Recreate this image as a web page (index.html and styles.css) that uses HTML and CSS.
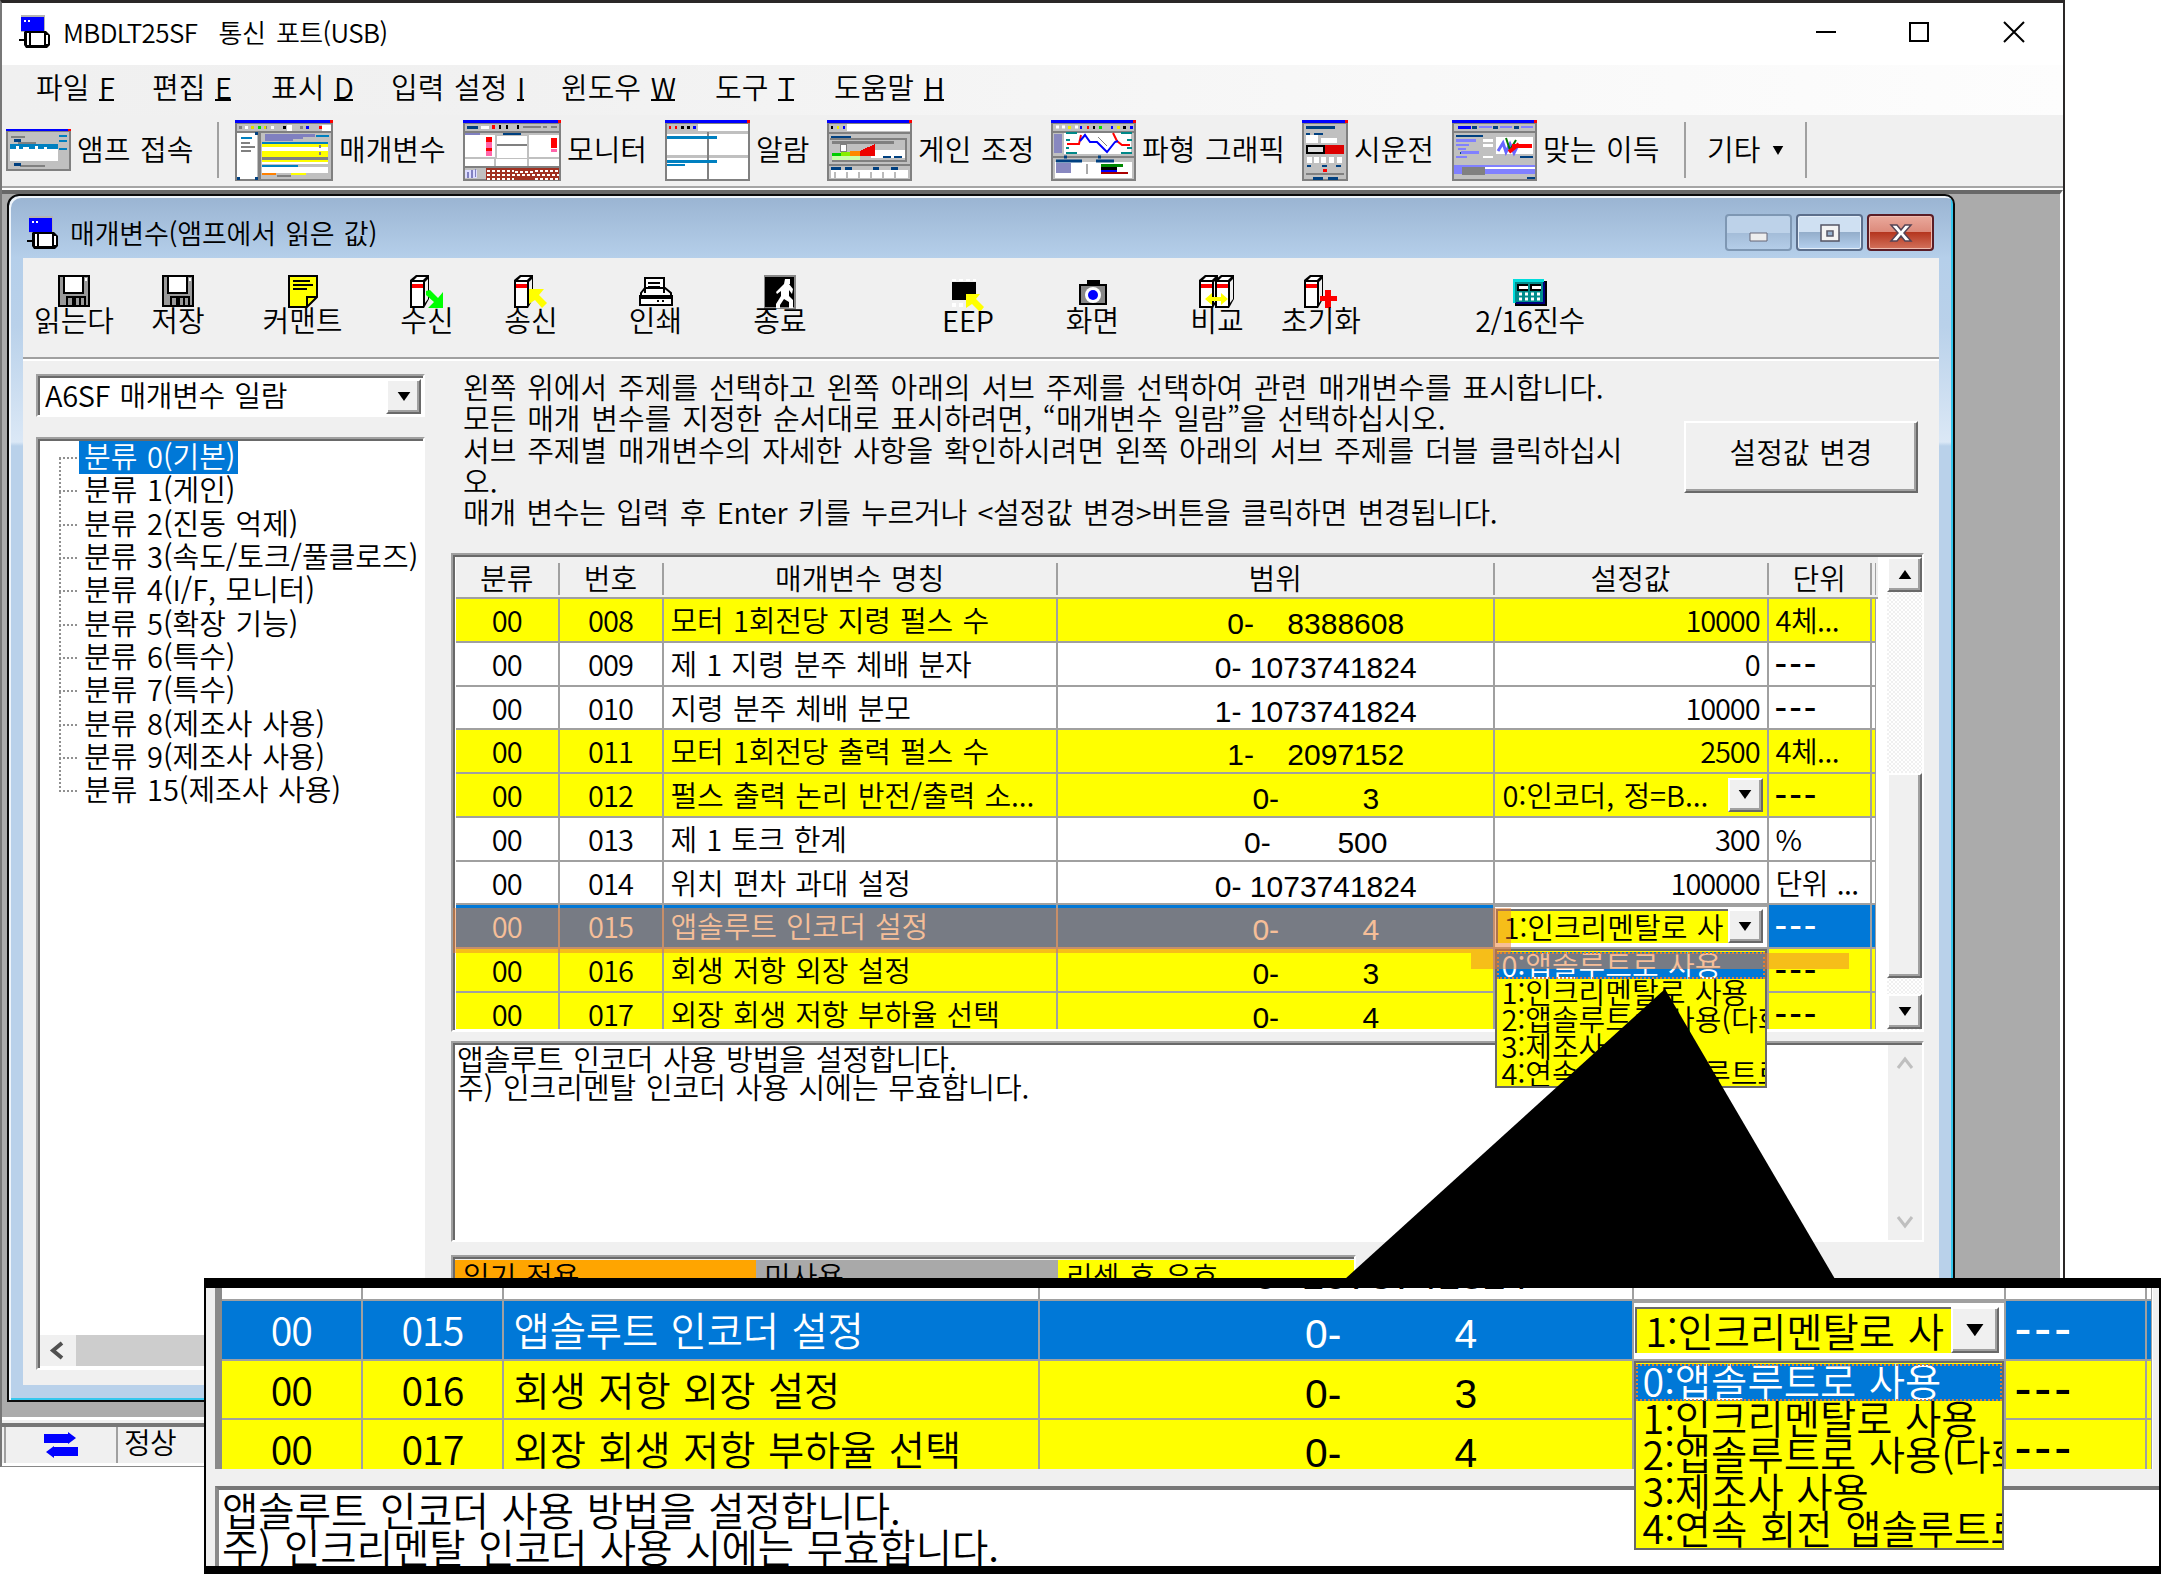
FILE: index.html
```html
<!DOCTYPE html>
<html lang="ko">
<head>
<meta charset="utf-8">
<title>MBDLT25SF 통신 포트(USB)</title>
<link rel="stylesheet" href="styles.css">
</head>
<body>
<svg width="0" height="0" class="defs" aria-hidden="true">
  <symbol id="app" viewBox="0 0 32 34">
    <path d="M2 0h24v17H2z" fill="#b4b4b4"/><path d="M2 2h23v14H2z" fill="#00f"/>
    <path d="M5 5h2v2H5zM9 5h2v2H9z" fill="#fff"/>
    <path d="M0 24h6v2H0z"/><path d="M6 16h21l4 4v10l-3 3H7l-2-3V17z"/>
    <path d="M8 18h2v12H8zM12 18h13v12H12zM27 20h2v9h-2z" fill="#fff"/>
  </symbol>
  <symbol id="disk" viewBox="0 0 32 32">
    <path d="M0 0h32v32H0z"/><path d="M2 2h28v28H2z" fill="#999"/><path d="M5 0h21v19H5z"/><path d="M7 2h17v15H7z" fill="#fff"/>
    <path d="M8 21h20v9H8z"/><path d="M10 23h4v7h-4zM18 23h3v7h-3zM23 23h3v7h-3z" fill="#999"/><path d="M27 3h2v3h-2z" fill="#fff"/>
  </symbol>
  <symbol id="book" viewBox="0 0 24 34">
    <path d="M1 5l6-5h13v24l-5 9H1z"/><path d="M8 2h9l-3 3H5z" fill="#fff"/><path d="M3 7h11v24H3z" fill="#fff"/><path d="M3 9h11v4H3z" fill="#f00"/><path d="M16 7l3-3v20l-3 4z" fill="#efefef"/>
  </symbol>
  <symbol id="down" viewBox="0 0 16 10"><path d="M1 0h14L8 10z"/></symbol>
</svg>

<main class="window">
  <header class="titlebar">
    <svg class="app-icon"><use href="#app"/></svg>
    <h1 class="title">MBDLT25SF&nbsp; 통신 포트(USB)</h1>
    <svg class="win-controls" viewBox="0 0 212 24" fill="none" stroke="#000" stroke-width="2"><path d="M0 12h20M94 3h18v18H94zM188 2l20 20M208 2l-20 20"/></svg>
  </header>
  <nav class="menubar">
    <span>파일 <u>F</u></span><span>편집 <u>E</u></span><span>표시 <u>D</u></span><span>입력 설정 <u>I</u></span><span>윈도우 <u>W</u></span><span>도구 <u>T</u></span><span>도움말 <u>H</u></span>
  </nav>
  <div class="toolbar">
    <div class="tool tool-connect">
      <svg width="65" height="42" viewBox="0 0 65 42" shape-rendering="crispEdges"><path d="M0 0h65v42H0z" fill="#808080"/><path d="M2 3h61v37H2z" fill="#c0c0c0"/><path d="M0 0h62v2H0z" fill="#00f"/><path d="M62 0h3v2h-3z" fill="red"/><path d="M5 7h14v2H5zM12 13h18v2H12zM14 36h25v2H14z" fill="#808080"/><path d="M4 15h48v5H4zM53 6h8v2h-8zM53 11h8v2h-8zM53 19h8v2h-8z" fill="#0080c0"/><path d="M4 20h48v12H4zM10 17h3v3h-3zM17 18h6v2h-6zM29 17h3v3h-3zM38 18h3v2h-3z" fill="#fff"/><path d="M8 10h7v3H8zM8 34h7v3H8z" fill="#004080"/></svg>
      <span>앰프 접속</span></div>
    <div class="tool tool-param">
      <svg width="98" height="61" viewBox="0 0 98 61" shape-rendering="crispEdges"><path d="M0 0h98v61H0z" fill="#808080"/><path d="M2 4h94v55H2z" fill="#c0c0c0"/><path d="M0 0h95v3H0z" fill="#00f"/><path d="M95 0h3v3h-3z" fill="red"/><path d="M0 11h98v2H0z" fill="#808080"/><path d="M87 5h9v6h-9zM52 5h5v6h-5zM10 6h3v3h-3zM36 6h3v3h-3z" fill="#fff"/><path d="M4 6h3v3H4zM29 6h3v3h-3zM65 6h3v3h-3z" fill="#808080"/><path d="M16 6h3v3h-3zM29 6h2v3h-2z" fill="#dd0"/><path d="M23 6h3v3h-3z" fill="#0d0"/><path d="M48 6h3v3h-3z"/><path d="M71 6h3v3h-3z" fill="#00f"/><path d="M84 6h3v3h-3z" fill="red"/><path d="M2 13h20v46H2z" fill="#fff"/><path d="M23 13h3v48h-3zM6 22h9v2H6zM6 26h14v2H6zM6 30h10v2H6z" fill="#808080"/><path d="M6 17h11v2H6zM81 15h13v2H81zM27 22h66v2H27zM27 45h36v2H27z" fill="#0080c0"/><path d="M30 14h50v3H68v2H58v2H30z" fill="#8080c0"/><path d="M27 27h66v5H27zM27 41h66v3H27zM27 47h66v6H27z" fill="#fff"/><path d="M27 24h66v3H27zM27 31h66v6H27zM27 40h66v2H27zM56 53h15v2H56z" fill="#ff0"/><path d="M27 37h66v3H27zM84 25h2v3h-2zM84 32h2v3h-2zM42 55h14v2H42z" fill="#808080"/><path d="M27 53h14v2H27z" fill="#ff8000"/><path d="M2 57h3v3H2zM20 57h3v3h-3zM20 12h3v3h-3z" fill="#004080"/></svg>
      <span>매개변수</span></div>
    <div class="tool tool-monitor">
      <svg width="98" height="61" viewBox="0 0 98 61" shape-rendering="crispEdges"><path d="M0 0h98v61H0z" fill="#808080"/><path d="M2 4h94v55H2z" fill="#c0c0c0"/><path d="M0 0h95v3H0z" fill="#00f"/><path d="M95 0h3v3h-3z" fill="red"/><path d="M2 15h30v22H2zM34 16h30v22H34zM66 15h30v22H66zM2 39h29v7H2zM33 39h31v7H33zM66 39h30v7H66zM18 6h8v3h-8z" fill="#fff"/><path d="M0 11h98v2H0zM34 24h30v2H34zM60 6h18v2H60zM80 6h4v2h-4zM88 6h6v2h-6zM0 46h98v2H0z" fill="#808080"/><path d="M4 6h11v3H4zM40 13h18v2H40z" fill="#004080"/><path d="M29 5h3v4h-3zM23 17h6v5h-6zM23 28h6v3h-6zM88 18h6v10h-6z" fill="red"/><path d="M23 22h6v6h-6zM23 31h6v5h-6zM88 29h6v3h-6z" fill="#f6a"/><path d="M36 5h2v4h-2zM43 5h2v4h-2zM54 5h2v4h-2z"/><path d="M2 50h12v8H2z" fill="#ddf"/><path d="M4 52h2v6H4zM8 50h2v8H8zM12 49h1v8h-1zM2 13h15v2H2z" fill="#8080c0"/><path d="M23 48h73v12H23z" fill="#a03020"/><path d="M24 51h27M24 55h72M24 59h27M52 52h20M72 51h24M72 59h24" stroke="#fff" stroke-width="2" stroke-dasharray="3 2"/></svg>
      <span>모니터</span></div>
    <div class="tool tool-alarm">
      <svg width="85" height="61" viewBox="0 0 85 61" shape-rendering="crispEdges"><path d="M0 0h85v61H0z" fill="#808080"/><path d="M2 4h81v55H2z" fill="#c0c0c0"/><path d="M0 0h82v3H0z" fill="#00f"/><path d="M82 0h3v3h-3z" fill="red"/><path d="M33 4h50v7H33zM2 14h81v21H2zM2 38h81v21H2z" fill="#fff"/><path d="M4 6h2v3H4zM10 6h2v3h-2z" fill="red"/><path d="M16 6h3v3h-3zM22 6h3v3h-3z"/><path d="M28 6h3v3h-3z" fill="#00f"/><path d="M42 12h2v47h-2z" fill="#808080"/><path d="M2 16h50v3H2zM2 40h50v3H2zM2 44h18v2H2z" fill="#0080c0"/></svg>
      <span>알람</span></div>
    <div class="tool tool-gain">
      <svg width="85" height="61" viewBox="0 0 85 61" shape-rendering="crispEdges"><path d="M0 0h85v61H0z" fill="#808080"/><path d="M2 4h81v55H2z" fill="#c0c0c0"/><path d="M0 0h82v3H0z" fill="#00f"/><path d="M82 0h3v3h-3z" fill="red"/><path d="M20 4h63v7H20zM4 50h77v8H4zM44 30h34v8H44z" fill="#fff"/><path d="M4 6h2v3H4z"/><path d="M10 6h2v3h-2z" fill="#ee0"/><path d="M16 6h2v3h-2z" fill="#00f"/><path d="M0 12h85v2H0zM3 18h77v2H3zM5 21h62v3H5zM5 40h75v2H5zM0 44h85v2H0zM78 20h2v20h-2z" fill="#808080"/><path d="M4 16h20v2H4zM4 47h10v3H4zM18 47h7v3h-7zM46 47h6v3h-6zM64 47h7v3h-7zM56 36h8v2h-8zM67 36h8v2h-8z" fill="#004080"/><path d="M5 33h9v3H5z" fill="#0c0"/><path d="M14 32h9v4h-9z" fill="#8e0"/><path d="M23 31h10v5H23z" fill="#f80"/><path d="M33 36v-5l15-7v12z" fill="#e00"/><path d="M5 36h28v4H5z" fill="#cfa"/><path d="M13 24h6v7h-6z" fill="#fff" stroke="#808080"/><path d="M8 52v6M20 52v6M32 52v6M44 52v6M56 52v6M68 52v6" stroke="#bbb" stroke-width="2"/></svg>
      <span>게인 조정</span></div>
    <div class="tool tool-wave">
      <svg width="85" height="61" viewBox="0 0 85 61"><path d="M0 0h85v61H0z" fill="#808080"/><path d="M2 4h81v55H2z" fill="#c0c0c0"/><path d="M0 0h82v3H0z" fill="#00f"/><path d="M82 0h3v3h-3z" fill="red"/><path d="M0 11h85v2H0zM2 36h81v2H2z" fill="#808080"/><path d="M13 13h67v21H13zM4 42h77v16H4z" fill="#fff"/><path d="M5 7h12M24 7h3" stroke="#fff" stroke-width="3" stroke-dasharray="3 3"/><path d="M17 6h3v3h-3zM66 6h3v3h-3z" fill="#ee0"/><path d="M29 6h2v3h-2zM60 6h2v3h-2zM79 6h3v3h-3z" fill="#00f"/><path d="M36 6h2v3h-2z" fill="red"/><path d="M42 6h2v3h-2zM72 6h3v3h-3z"/><path d="M48 6h3v3h-3z" fill="#0d0"/><path d="M15 13h11M15 33h11M70 13h11M70 33h11M15 20h4M76 20h5M15 28h3M76 28h5" stroke="#088" stroke-width="2"/><path d="M16 24h12l2-9M62 13l4 8 5 4h8" fill="none" stroke="red" stroke-width="2"/><path d="M29 21l5-6 5 7h7l10 10 8-10 3-1" fill="none" stroke="#00f" stroke-width="2"/><path d="M47 17l9 9" stroke="#808080"/><path d="M3 14h8v19H3zM5 43h15v10H5z" fill="#8888c0"/><path d="M5 41h26M45 41h18M13 37h3M47 37h3" stroke="#004080" stroke-width="3"/><path d="M36 44v10" stroke="#555"/><path d="M50 44h22v3H50z" fill="#080"/><path d="M50 47h16v3H50z" fill="#000"/><path d="M50 50h16v2H50z" fill="#00f"/><path d="M50 52h27v2H50z" fill="#a00"/></svg>
      <span>파형 그래픽</span></div>
    <div class="tool tool-trial">
      <svg width="46" height="61" viewBox="0 0 46 61" shape-rendering="crispEdges"><path d="M0 0h46v61H0z" fill="#808080"/><path d="M2 4h42v55H2z" fill="#c0c0c0"/><path d="M0 0h43v3H0z" fill="#00f"/><path d="M43 0h3v3h-3z" fill="red"/><path d="M4 6h29v3H4zM4 13h4v2H4zM12 13h9v2h-9zM5 45h4v2H5zM20 45h5v2h-5zM34 45h5v2h-5zM11 57h10v3H11zM26 57h10v3H26z" fill="#004080"/><path d="M4 15h12v8H4zM19 18h16v5H19zM5 37h5v6H5zM12 37h5v6h-5zM19 37h5v6h-5zM27 37h5v6h-5zM35 37h5v6h-5z" fill="#fff"/><path d="M4 25h19v9H4z"/><path d="M6 27h15v5H6z" fill="#ddd"/><path d="M23 25h19v9H23z" fill="#d00"/><path d="M21 49h4v3h-4z" fill="red"/><path d="M4 53h38v2H4z" fill="#808080"/></svg>
      <span>시운전</span></div>
    <div class="tool tool-fit">
      <svg width="85" height="61" viewBox="0 0 85 61"><path d="M0 0h85v61H0z" fill="#808080"/><path d="M2 4h81v55H2z" fill="#c0c0c0"/><path d="M0 0h82v3H0z" fill="#00f"/><path d="M82 0h3v3h-3z" fill="red"/><path d="M0 11h85v2H0z" fill="#808080"/><path d="M6 6h13v3H6z" fill="#00f"/><path d="M20 6h5v3h-5zM41 6h5v3h-5zM62 6h5v3h-5zM4 15h27v2H4zM8 32h3v2H8zM68 36h13v2H68z" fill="#004080"/><path d="M27 6h13v2H27zM48 6h12v2H48zM69 6h12v2H69zM4 19h20v3H4zM4 24h13v2H4zM6 28h8v2H6zM9 31h18v3H9zM4 36h11v2H4zM2 45h81v9H2z" fill="#8080ff"/><path d="M31 19h10v3H31zM31 24h10v3H31zM31 36h10v2H31zM44 17h37v17H44zM33 47h50v2H33z" fill="#fff"/><path d="M46 31l5-8 3 9 4-8 4 9 4-8" fill="none" stroke="#66f" stroke-width="3"/><path d="M54 18l4 12 6-10" fill="none" stroke="#070" stroke-width="2"/><path d="M60 26h20M57 32l10-8" stroke="red" stroke-width="4"/><path d="M10 47h23v8H10z" fill="#808080"/><path d="M75 57h8v2h-8z" fill="#004080"/></svg>
      <span>맞는 이득</span></div>
    <div class="tool-more"><span>기타</span><svg width="12" height="9" viewBox="0 0 16 10" preserveAspectRatio="none"><use href="#down"/></svg></div>
  </div>

  <section class="mdi">
    <article class="child">
      <header class="child-title">
        <svg class="app-icon"><use href="#app"/></svg>
        <h2 class="title">매개변수(앰프에서 읽은 값)</h2>
        <div class="caption-buttons">
          <i class="cap"><svg width="20" height="20"><path d="M1 10h17v8H1z" fill="#eee" stroke="#667"/></svg></i>
          <i class="cap cap-max"><svg width="22" height="20"><path d="M2 2h18v16H2zM8 8h6v5H8z" fill="#f4f4f4" fill-rule="evenodd" stroke="#556" stroke-width="1.5"/></svg></i>
          <i class="cap cap-close"><svg width="24" height="20"><path d="M2 2h6l4 5 4-5h6l-7 8 7 8h-6l-4-5-4 5H2l7-8z" fill="#fff" stroke="#545" stroke-width="1.5"/></svg></i>
        </div>
      </header>
      <div class="child-body">
        <div class="actions">
          <div class="action"><svg width="32" height="32"><use href="#disk"/></svg><span>읽는다</span></div>
          <div class="action"><svg width="32" height="32"><use href="#disk"/></svg><span>저장</span></div>
          <div class="action gap-s"><svg width="30" height="34" viewBox="0 0 30 34"><path d="M1 1h28v21L19 32H1z" fill="#ff0" stroke="#000" stroke-width="2"/><path d="M5 6h17M5 10h20M5 14h14M29 22H19v10" stroke="#000" stroke-width="2" fill="none"/></svg><span>커맨트</span></div>
          <div class="action gap-s"><svg width="36" height="34" viewBox="0 0 36 34"><use href="#book" width="24" height="34"/><path d="M17 16l4-1 8 8 5-6v16H19l6-6-8-7z" fill="#0f0"/></svg><span>수신</span></div>
          <div class="action"><svg width="36" height="34" viewBox="0 0 36 34"><use href="#book" width="24" height="34"/><path d="M16 14h15l-5 6 8 8-5 5-7-8-6 4z" fill="#ff0"/></svg><span>송신</span></div>
          <div class="action gap-s"><svg width="34" height="32" viewBox="0 0 34 32" fill="#fff" stroke="#000" stroke-width="2"><path d="M6 18V3h19v15M2 18l4-5h20l6 5v5H2zM1 21h32v9H1z"/><path d="M9 8h12M9 12h12M18 26h2M23 26h2"/></svg><span>인쇄</span></div>
          <div class="action gap-s"><svg width="32" height="34" viewBox="0 0 32 34"><path d="M0 0h32v34H0z" fill="#888"/><path d="M1 2h29v30H1z"/><path d="M21 4h5v5h-1l4 5-1 5-3-4v6l4 4v8h-4v-6l-5-3-4 6v3h-4v-4l5-8v-5l-4 3-1-2 8-8z" fill="#fff"/></svg><span>종료</span></div>
          <div class="action gap-m"><svg width="34" height="32" viewBox="0 0 34 32"><path d="M1 0h24M1 26h14" stroke="#fff" stroke-width="4" stroke-dasharray="4 3"/><path d="M1 3h24v18H1z"/><path d="M15 15h14l-4 5 8 8-4 5-8-8-6 4z" fill="#ff0"/></svg><span>EEP</span></div>
          <div class="action gap-s"><svg width="28" height="28" viewBox="0 0 28 28"><path d="M0 5h8V1h13v4h7v21H0z"/><path d="M2 7h24v17H2z" fill="#888"/><circle cx="14" cy="16" r="8" fill="#fff"/><circle cx="14" cy="16" r="5" fill="#00f"/></svg><span>화면</span></div>
          <div class="action gap-s"><svg width="36" height="34" viewBox="0 0 36 34"><use href="#book" width="24" height="34" x="-1"/><use href="#book" width="24" height="34" x="15"/><path d="M6 24l7-6v4h9v-4l7 6-7 6v-4h-9v4z" fill="#ff0"/></svg><span>비교</span></div>
          <div class="action"><svg width="36" height="34" viewBox="0 0 36 34"><use href="#book" width="24" height="34"/><path d="M22 15h6v6h6v5h-6v7h-6v-7h-5v-5h5z" fill="#f00"/></svg><span>초기화</span></div>
          <div class="action gap-l"><svg width="34" height="27" viewBox="0 0 34 27"><path d="M2 2h32v25H2z"/><path d="M0 0h31v24H0z" fill="#008c8c"/><path d="M0 0h31v3H0zM0 0h2v24H0z" fill="#0dd"/><path d="M30 3h2v22H3v-2h27z" fill="#000080"/><path d="M4 5h11v7H4zM17 5h11v7H17z"/><path d="M6 7h9v3H6zM19 7h9v3h-9z" fill="#fff"/><path d="M6 15h23M6 20h23" stroke="#fff" stroke-width="3" stroke-dasharray="3 3"/></svg><span>2/16진수</span></div>
        </div>
        <div class="panes">
          <aside class="side">
            <div class="combo"><span>A6SF 매개변수 일람</span><i class="drop-btn"><svg><use href="#down"/></svg></i></div>
            <div class="tree-box">
              <ul class="tree">
                <li><b>분류 0(기본)</b></li><li>분류 1(게인)</li><li>분류 2(진동 억제)</li><li>분류 3(속도/토크/풀클로즈)</li><li>분류 4(I/F, 모니터)</li><li>분류 5(확장 기능)</li><li>분류 6(특수)</li><li>분류 7(특수)</li><li>분류 8(제조사 사용)</li><li>분류 9(제조사 사용)</li><li>분류 15(제조사 사용)</li>
              </ul>
              <div class="hscroll"><svg width="36" height="31" fill="none" stroke="#505050" stroke-width="4"><path d="M22 8l-9 7.500 9 7.500"/></svg><i></i></div>
            </div>
          </aside>
          <div class="content">
            <div class="intro">
              <p>왼쪽 위에서 주제를 선택하고 왼쪽 아래의 서브 주제를 선택하여 관련 매개변수를 표시합니다.<br>모든 매개 변수를 지정한 순서대로 표시하려면, “매개변수 일람”을 선택하십시오.<br>서브 주제별 매개변수의 자세한 사항을 확인하시려면 왼쪽 아래의 서브 주제를 더블 클릭하십시<br>오.<br><span class="tight">매개 변수는 입력 후 Enter 키를 누르거나 &lt;설정값 변경&gt;버튼을 클릭하면 변경됩니다.</span></p>
              <button class="change">설정값 변경</button>
            </div>
            <div class="grid-box">
              <div class="grid">
                <div class="row head"><span>분류</span><span>번호</span><span>매개변수 명칭</span><span>범위</span><span>설정값</span><span>단위</span><span></span></div>
                <div class="row y"><span>00</span><span>008</span><span>모터 1회전당 지령 펄스 수</span><span>0-    8388608</span><span>10000</span><span>4체...</span><span></span></div>
                <div class="row"><span>00</span><span>009</span><span>제 1 지령 분주 체배 분자</span><span>0- 1073741824</span><span>0</span><span class="none">---</span><span></span></div>
                <div class="row"><span>00</span><span>010</span><span>지령 분주 체배 분모</span><span>1- 1073741824</span><span>10000</span><span class="none">---</span><span></span></div>
                <div class="row y"><span>00</span><span>011</span><span>모터 1회전당 출력 펄스 수</span><span>1-    2097152</span><span>2500</span><span>4체...</span><span></span></div>
                <div class="row y"><span>00</span><span>012</span><span>펄스 출력 논리 반전/출력 소...</span><span>0-          3</span><span class="pick">0:인코더, 정=B...<i class="drop-btn"><svg><use href="#down"/></svg></i></span><span class="none">---</span><span></span></div>
                <div class="row"><span>00</span><span>013</span><span>제 1 토크 한계</span><span>0-        500</span><span>300</span><span>%</span><span></span></div>
                <div class="row"><span>00</span><span>014</span><span>위치 편차 과대 설정</span><span>0- 1073741824</span><span>100000</span><span>단위 ...</span><span></span></div>
                <div class="row sel"><span>00</span><span>015</span><span>앱솔루트 인코더 설정</span><span>0-          4</span><span class="edit"><em>1:인크리멘탈로 사</em><i class="drop-btn"><svg><use href="#down"/></svg></i>
                  <ul class="options"><li>0:앱솔루트로 사용</li><li>1:인크리멘탈로 사용</li><li>2:앱솔루트로 사용(다회전</li><li>3:제조사 사용</li><li>4:연속 회전 앱솔루트로</li></ul></span><span class="none">---</span><span></span></div>
                <div class="row y"><span>00</span><span>016</span><span>회생 저항 외장 설정</span><span>0-          3</span><span></span><span class="none">---</span><span></span></div>
                <div class="row y tail"><span>00</span><span>017</span><span>외장 회생 저항 부하율 선택</span><span>0-          4</span><span></span><span class="none">---</span><span></span></div>
              </div>
              <div class="vscroll"><i class="sb"><svg class="up"><use href="#down"/></svg></i><i class="thumb"></i><i class="sb"><svg><use href="#down"/></svg></i></div>
              <i class="mark mark-row"></i><i class="mark mark-option"></i>
            </div>
            <div class="note"><p>앱솔루트 인코더 사용 방법을 설정합니다.<br>주) 인크리멘탈 인코더 사용 시에는 무효합니다.</p>
              <div class="note-scroll"><svg width="18" height="18"><path d="M2 14l7-9 7 9"/></svg><svg width="18" height="18"><path d="M2 4l7 9 7-9"/></svg></div></div>
            <div class="legend"><span>읽기 전용</span><span>미사용</span><span>리셋 후 유효</span></div>
          </div>
        </div>
      </div>
    </article>
  </section>
  <footer class="status">
    <div class="link"><svg width="36" height="26" viewBox="0 0 36 26" fill="#00f"><path d="M1 2h24V0l8 6-8 6v-1H1zM35 15v9H11v2l-8-6 8-6v1z"/></svg></div>
    <div class="state">정상</div>
  </footer>
</main>

<svg class="pointer" width="490" height="290" viewBox="0 0 490 290"><path d="M320 0L490 290H0z"/></svg>

<section class="callout">
  <div class="grid zoomed">
    <div class="row cut"><span></span><span></span><span></span><span>0- 1073741824</span><span></span><span></span><span></span></div>
    <div class="row sel"><span>00</span><span>015</span><span>앱솔루트 인코더 설정</span><span>0-          4</span><span class="edit"><em>1:인크리멘탈로 사</em><i class="drop-btn"><svg><use href="#down"/></svg></i>
      <ul class="options"><li>0:앱솔루트로 사용</li><li>1:인크리멘탈로 사용</li><li>2:앱솔루트로 사용(다회전</li><li>3:제조사 사용</li><li>4:연속 회전 앱솔루트로</li></ul></span><span class="none">---</span><span></span></div>
    <div class="row y"><span>00</span><span>016</span><span>회생 저항 외장 설정</span><span>0-          3</span><span></span><span class="none">---</span><span></span></div>
    <div class="row y tail"><span>00</span><span>017</span><span>외장 회생 저항 부하율 선택</span><span>0-          4</span><span></span><span class="none">---</span><span></span></div>
  </div>
  <p class="callout-note">앱솔루트 인코더 사용 방법을 설정합니다.<br>주) 인크리멘탈 인코더 사용 시에는 무효합니다.</p>
</section>
</body>
</html>
```
FILE: styles.css
```css
* { box-sizing: border-box; }
body {
  margin: 0; position: relative; width: 2161px; height: 1574px; overflow: hidden;
  background: #fff; color: #000;
  font: 350 29px/32px "Noto Sans CJK KR", "Noto Sans", sans-serif;
  word-spacing: 1.5px; white-space: nowrap;
}
.defs { position: absolute; }
h1, h2, p, ul { margin: 0; padding: 0; font-weight: inherit; }
li { list-style: none; }
i, em { font-style: normal; }
svg { display: block; flex: none; }

.window {
  width: 2065px; height: 1467px; display: flex; flex-direction: column;
  background: #f0f0f0; border: solid #2a2727; border-width: 3px 2px 1px;
  border-left-color: #777; border-bottom-color: #888;
}
.titlebar { height: 62px; background: #fff; display: flex; align-items: center; padding: 0 0 5px 17px; }
.app-icon { width: 32px; height: 34px; }
.title { font-size: 26px; word-spacing: 4px; letter-spacing: -.6px; }
.titlebar .title { margin-left: 12px; }
.win-controls { width: 212px; height: 24px; margin-left: auto; margin-right: 35px; }

.menubar {
  height: 50px; display: grid; align-items: center; padding: 0 0 8px 34px;
  grid-template-columns: 116px 119px 120px 170px 154px 119px auto;
  background: linear-gradient(90deg, #f0f0f0, #f1f1f1 25%, #fdfdfd);
}
.menubar u { text-decoration: none; border-bottom: 2px solid #000; display: inline-block; line-height: 26px; letter-spacing: -1px; }

.toolbar { height: 75px; display: flex; align-items: center; padding: 0 0 3px 4px; border-bottom: 2px solid #fff; box-shadow: inset 0 -2px #a5a5a5; }
.tool { display: flex; align-items: center; gap: 6px; }
.tool span, .tool-more span { padding-bottom: 4px; }
.tool-connect { width: 213px; height: 56px; border-right: 2px solid #a0a0a0; margin-right: 16px; }
.tool-param { width: 228px; }
.tool-monitor { width: 202px; }
.tool-alarm { width: 162px; }
.tool-gain { width: 224px; }
.tool-wave { width: 251px; }
.tool-trial { width: 150px; }
.tool-fit { width: 232px; height: 61px; }
.tool-more { display: flex; align-items: center; gap: 12px; height: 56px; width: 123px; padding-left: 21px; border: solid #a0a0a0; border-width: 0 2px; }

.mdi { height: 1230px; background: #ababab; border-top: 4px solid #686868; border-right: 3px solid #fff; border-bottom: 3px solid #fff; padding-left: 5px; }
.child {
  width: 1948px; height: 1208px; border: 2px solid #0a0a0a; border-radius: 12px 10px 0 0;
  background: linear-gradient(#9ab4d2 0, #b5cfea 62px, #b9d1ea 130px, #dbe8f6 246px, #b9d1ea 250px);
  box-shadow: inset 2px 2px #eef4fa, inset -2px -2px #35c8ee; padding: 2px 14px 0 14px;
}
.child-title { height: 60px; display: flex; align-items: center; padding: 9px 5px 0 4px; }
.child-title .title { margin-left: 11px; font-size: 27px; letter-spacing: -.2px; word-spacing: 2px; }
.caption-buttons { margin-left: auto; display: flex; gap: 4px; }
.cap { width: 67px; height: 37px; display: grid; place-items: center; border: 2px solid #7e97b3; border-radius: 4px; background: linear-gradient(#bdd2e9 50%, #a3bcd8 50%, #b4cde8); }
.cap-max { border-color: #5c6f8c; background: linear-gradient(#cfe0f2 48%, #94aecb 50%, #b5d0ee); box-shadow: inset 0 0 0 1px #e3eefa; }
.cap-close { border-color: #5b1d26; background: linear-gradient(#eaa99c, #dc8a7b 48%, #b5361f 50%, #d3725c); box-shadow: inset 0 0 0 1px #f0bcb0; }

.child-body { height: 1127px; background: #f0f0f0; display: flex; flex-direction: column; }
.actions { height: 103px; display: flex; padding: 17px 0 0 0; border-bottom: 2px solid #fff; box-shadow: inset 0 -2px #a0a0a0; }
.action { width: 104px; display: flex; flex-direction: column; align-items: center; height: 57px; position: relative; left: -1px; }
.action span { line-height: 26px; margin-top: auto; }
.gap-s { margin-left: 20.5px; }
.gap-m { margin-left: 84px; }
.gap-l { margin-left: 105px; letter-spacing: -.5px; }
.action:nth-child(8) svg, .action:nth-child(9) svg, .action:nth-child(12) svg { margin-top: 4px; }
.action svg { margin-bottom: -12px; }

.panes { flex: 1; display: grid; grid-template-columns: 389px 1473px; column-gap: 26px; padding: 13px 0 0 13px; }
.side { display: flex; flex-direction: column; }
.combo, .tree-box, .grid-box, .note, .legend {
  border: 2px solid; border-color: #a0a0a0 #fff #fff #a0a0a0; box-shadow: inset 2px 2px #696969;
}
.combo { height: 43px; background: #fff; display: flex; align-items: center; justify-content: space-between; padding: 2px 2px 0 7px; }
.combo span { letter-spacing: -.3px; padding-bottom: 5px; }
.drop-btn, .sb, .thumb {
  display: grid; place-items: center; background: #f0f0f0; border: 2px solid;
  border-color: #fff #696969 #696969 #fff; box-shadow: inset -2px -2px #a0a0a0;
}
.drop-btn { width: 35px; height: 35px; }
.drop-btn svg, .sb svg { width: 16px; height: 9px; }
.sb .up { transform: rotate(180deg); }
.tree-box { margin-top: 20px; height: 933px; background: #fff; display: flex; flex-direction: column; justify-content: space-between; padding: 2px; overflow: hidden; }
.tree { padding-left: 19px; }
.tree li { height: 33.35px; line-height: 28px; display: flex; position: relative; padding-left: 25px; }
.tree li::before {
  content: ""; position: absolute; left: 0; top: -16px; width: 18px; height: 34px;
  background: repeating-linear-gradient(#909090 0 2px, transparent 2px 4px) 0 0 / 2px 100% no-repeat,
              repeating-linear-gradient(90deg, #909090 0 2px, transparent 2px 4px) 0 100% / 100% 2px no-repeat;
}
.tree li:first-child::before { top: 16px; height: 2px; }
.tree b { font-weight: inherit; background: #0078d7; color: #fff; margin-left: -5px; padding: 0 3px 0 5px; height: 33px; }
.hscroll { height: 31px; display: flex; background: #f0f0f0; }
.hscroll i { flex: 1; background: #cdcdcd; }

.content { display: flex; flex-direction: column; }
.intro { height: 179px; display: flex; justify-content: space-between; padding: 0 6px 0 12px; }
.intro p { line-height: 31.3px; margin-top: -3px; word-spacing: 2.7px; }
.tight { letter-spacing: -.25px; }
.change { width: 234px; height: 72px; margin-top: 47px; font: inherit; word-spacing: 1.5px; color: inherit; background: #f0f0f0; border: 2px solid; border-color: #fff #696969 #696969 #fff; box-shadow: inset -2px -2px #a0a0a0; padding: 0 0 12px; }

.grid-box { position: relative; height: 479px; background: #fff; display: flex; justify-content: space-between; padding: 2px 0 0 3px; }
.grid { --u: 1px; --row: 43.75px; font-size: calc(29 * var(--u)); word-spacing: calc(1.2 * var(--u)); width: calc(1421.5 * var(--u)); }
.row {
  display: grid; height: var(--row); line-height: calc(41 * var(--u));
  grid-template-columns: calc(103.5 * var(--u)) calc(104 * var(--u)) calc(394.5 * var(--u)) calc(436.5 * var(--u)) calc(274 * var(--u)) calc(103.5 * var(--u)) calc(4 * var(--u));
}
.row > span { height: var(--row); border: solid #a0a0a0; border-width: 0 2px 2px 0; white-space: pre; position: relative; }
.row > :nth-child(1), .row > :nth-child(2) { text-align: center; letter-spacing: -1px; }
.row > :nth-child(3) { padding-left: calc(7 * var(--u)); letter-spacing: calc(-.1 * var(--u)); }
.row > :nth-child(4) { text-align: center; padding-left: calc(81 * var(--u)); font: 400 calc(30 * var(--u))/calc(49 * var(--u)) "Liberation Sans", sans-serif; word-spacing: 0; }
.row > :nth-child(5) { text-align: right; padding-right: calc(7 * var(--u)); letter-spacing: -1.1px; }
.row > :nth-child(6) { padding-left: calc(7 * var(--u)); letter-spacing: calc(-.5 * var(--u)); }
.row > .none { font-family: "Liberation Sans", sans-serif; font-size: calc(38 * var(--u)); letter-spacing: calc(2 * var(--u)); padding-left: calc(6 * var(--u)); }
.row > :nth-child(7) { border-right-width: 1px; }
.y > span { background: #ff0; }
.sel > span { background: #0078d7; color: #fff; }
.row.head { height: 42px; background: #f0f0f0; border-bottom: 2px solid #a0a0a0; padding-top: 6px; }
.row.head > span { border-bottom: 0; height: 32px; line-height: 28px; text-align: center; padding: 0; letter-spacing: 0; font-family: inherit; font-size: 29px; font-weight: 350; }
.row.tail { height: calc(36 * var(--u)); overflow: hidden; }
.row > .pick, .row > .edit { display: flex; justify-content: space-between; align-items: center; padding: 0 calc(4 * var(--u)) 0 calc(8 * var(--u)); text-align: left; letter-spacing: 0; }
.row > .edit { background: #fff; color: #000; padding: 0 calc(4 * var(--u)) 0 calc(1 * var(--u)); box-shadow: inset 0 2px #a0a0a0; }
.edit em { flex: 1; background: #ff0; height: calc(34 * var(--u)); line-height: calc(31 * var(--u)); padding-left: calc(6 * var(--u)); overflow: hidden; border: solid #696969; border-width: 2px 0 0 2px; }
.grid .drop-btn { flex: none; width: calc(35 * var(--u)); height: calc(34 * var(--u)); }
.grid .drop-btn svg { width: calc(16 * var(--u)); height: calc(9 * var(--u)); }
.options {
  position: absolute; z-index: 2; left: 0; top: var(--row); width: calc(272 * var(--u)); height: calc(139 * var(--u));
  border: 2px solid #696969; background: #ff0; overflow: hidden; padding-top: calc(1 * var(--u));
}
.options li { height: calc(27 * var(--u)); line-height: calc(24 * var(--u)); padding-left: calc(5 * var(--u)); }
.options li:first-child { background: #0078d7; color: #fff; outline: 2px dotted #d9803a; outline-offset: -2px; }

.vscroll { width: 35px; display: flex; flex-direction: column; background: repeating-conic-gradient(#fff 0 25%, #f0f0f0 0 50%) 0 0 / 4px 4px; }
.sb { height: 35px; }
.thumb { height: 205px; margin: 181px 0 16px; }
.mark { position: absolute; z-index: 3; background: rgba(237, 125, 49, .5); }
.mark-row { left: 0; top: 353px; width: 1058px; height: 45px; }
.mark-option { left: 1018px; top: 398px; width: 378px; height: 16px; }

.note { height: 201px; margin-top: 9px; background: #fff; display: flex; justify-content: space-between; padding: 2px 0 0 4px; }
.note p { line-height: 27.5px; }
.note-scroll { width: 34px; background: #f0f0f0; display: flex; flex-direction: column; justify-content: space-between; align-items: center; padding: 9px 0; }
.note-scroll svg { fill: none; stroke: #bfbfbf; stroke-width: 3; }
.legend { width: 905px; height: 40px; margin-top: 13px; display: grid; grid-template-columns: 301px 302px 1fr; padding: 3px 0 0 2px; }
.legend span { padding-left: 8px; line-height: 30px; background: #ffa500; }
.legend :nth-child(2) { background: #a9a9a9; }
.legend :nth-child(3) { background: #ff0; }

.status { flex: 1; display: flex; margin-top: 3px; border-top: 4px solid #777; border-bottom: 3px solid #fff; padding: 0 0 0 2px; }
.link { width: 114px; border-right: 2px solid #a0a0a0; border-left: 2px solid #a0a0a0; display: flex; align-items: center; padding-left: 37px; }
.state { padding-left: 6px; line-height: 28px; letter-spacing: -.8px; }

.pointer { position: absolute; left: 1345px; top: 989px; z-index: 4; }
.callout {
  position: absolute; left: 204px; top: 1278px; width: 1957px; height: 296px; z-index: 5;
  background: #f0f0f0; border: solid #000; border-width: 10px 2px 8px; padding-left: 9px;
  display: flex; flex-direction: column; justify-content: space-between;
}
.zoomed { --u: 1.3595px; --row: 59.7px; width: 1938px; border-left: 7px solid #8a8a8a; background: #fff; }
.zoomed .row.cut { height: 13px; overflow: hidden; align-content: end; }
.zoomed .row.cut > span { line-height: 68px; }
.callout-note { height: 80px; background: #fff; border-top: 4px solid #777; border-left: 4px solid #8a8a8a; padding-left: 3px; font-size: 39.5px; line-height: 37px; word-spacing: 1.5px; overflow: hidden; }
```
